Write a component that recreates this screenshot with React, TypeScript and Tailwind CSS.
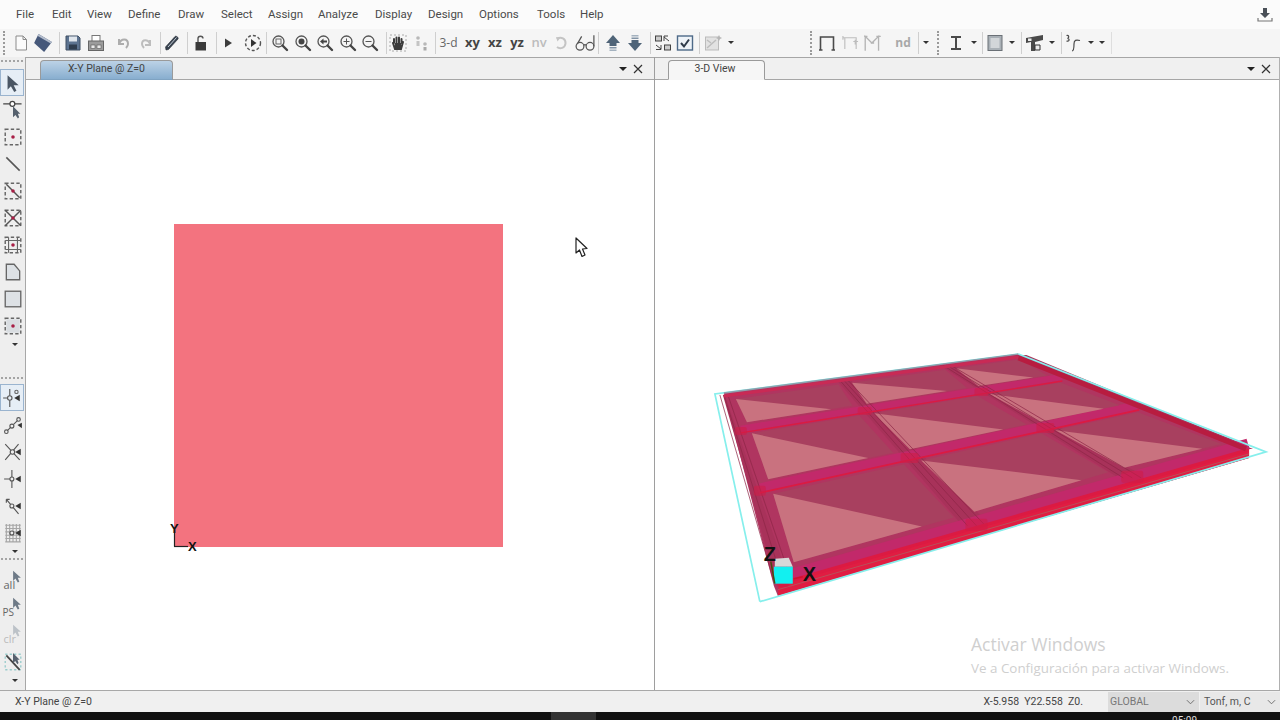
import React from "react";

type P = [number, number];
const grid: P[][] = [
  [[724, 395], [843, 379], [947, 365], [1019, 355]],
  [[741, 432], [865, 412], [982, 393], [1063, 380]],
  [[760, 492], [910, 459], [1046, 429], [1140, 409]],
  [[783, 582], [977, 526], [1133, 478], [1249, 449]],
];
const mix = (a: P, b: P, t: number): P => [a[0] + (b[0] - a[0]) * t, a[1] + (b[1] - a[1]) * t];
const cell = (r: number, c: number, u: number, v: number): P =>
  mix(mix(grid[r][c], grid[r][c + 1], u), mix(grid[r + 1][c], grid[r + 1][c + 1], u), v);
const pts = (a: P[]) => a.map((p) => `${p[0].toFixed(1)},${p[1].toFixed(1)}`).join(" ");

function Plate3D() {
  const cells: React.ReactNode[] = [];
  for (let r = 0; r < 3; r++)
    for (let c = 0; c < 3; c++) {
      const u0 = c === 0 ? 0.08 : 0.06, u1 = c === 2 ? 0.93 : 0.94, v0 = r === 0 ? 0.14 : 0.05, v1 = r === 0 ? 0.78 : 0.83;
      const tl = cell(r, c, u0, v0), tr = cell(r, c, u1, v0), br = cell(r, c, u1, v1), bl = cell(r, c, u0, v1);
      cells.push(<polygon key={`d${r}${c}`} points={pts([tl, tr, br, bl])} fill="#a8405f" />);
      cells.push(<polygon key={`l${r}${c}`} points={pts([tl, bl, mix(bl, br, 0.8)])} fill="#c9727f" />);
    }
  const cols = [0, 1, 2, 3].map((j) => {
    const b = grid[0][j], f = grid[3][j];
    const hb = j === 0 ? 1 : j === 3 ? 8 : 7, hf = j === 0 ? 7 : j === 3 ? 5 : 14;
    return <polygon key={j} points={pts([[b[0] - hb, b[1]], [b[0] + hb, b[1]], [f[0] + hf, f[1]], [f[0] - hf, f[1]]])} fill="#a8325a" />;
  });
  const colLines = [0, 1, 2].map((j) => {
    const b = grid[0][j], f = grid[3][j];
    return (
      <g key={j} stroke="#8f2747" strokeWidth="0.9" opacity="0.8">
        <line x1={b[0] - 4} y1={b[1]} x2={f[0] - 9} y2={f[1]} />
        <line x1={b[0]} y1={b[1]} x2={f[0]} y2={f[1]} />
        <line x1={b[0] + 4} y1={b[1]} x2={f[0] + 9} y2={f[1]} />
      </g>
    );
  });
  const rows = [1, 2, 3].map((i) => {
    const a = grid[i][0], b = grid[i][3];
    const w = [0, 3, 4, 5][i];
    return <line key={i} x1={a[0]} y1={a[1] - w} x2={b[0]} y2={b[1] - w} stroke="#c2296a" strokeWidth={w * 2.2} />;
  });
  const reds = [1, 2, 3].map((i) => {
    const a = grid[i][0], b = grid[i][3];
    const w = [0, 1.3, 1.8, 3.2][i];
    return <line key={i} x1={a[0]} y1={a[1] + 1} x2={b[0]} y2={b[1] + 1} stroke="#dc1a42" strokeWidth={w} />;
  });
  const nodes = [1, 2, 3].flatMap((i) =>
    [0, 1, 2].map((j) => {
      const p = grid[i][j];
      const w = j === 0 ? 12 : 10 + i * 4;
      return <rect key={`${i}-${j}`} x={p[0] - w / 2} y={p[1] - 4 - i} width={w} height={6 + i * 2} rx="2" fill="#cf1c48" opacity="0.6" />;
    })
  );
  return (
    <svg viewBox="655 80 625 610" className="block w-full h-full">
      <path d="M760 602 L715 394 L1019 354" fill="none" stroke="#86efec" strokeWidth="1.7" />
      <polygon points="724,393 1019,354 1250,446 1250,458 778,596 774,586" fill="#b03560" />
      {cols}
      {rows}
      {cells}
      {colLines}
      <polygon points="779,584 1250,449 1250,458 778,596" fill="#e01d42" />
      <line x1="778" y1="590" x2="1250" y2="454" stroke="#b8505a" strokeWidth="1" />
      {reds}
      {nodes}
      <line x1="724" y1="396" x2="1019" y2="357" stroke="#c92a55" strokeWidth="3" />
      <line x1="724" y1="393" x2="1019" y2="354" stroke="#8fa0ad" strokeWidth="1.4" />
      <line x1="1019" y1="358" x2="1247" y2="449" stroke="#b81c40" strokeWidth="5" />
      <polyline points="1019,354 1267,452 760,602" fill="none" stroke="#86efec" strokeWidth="1.7" />
      <polygon points="775,559 789,558 793,567 775,567" fill="#d8d8d8" />
      <rect x="774" y="567" width="19" height="17" fill="#12f0f0" />
      <line x1="771" y1="562" x2="775" y2="584" stroke="#4a4a10" strokeWidth="1.5" />
      <line x1="794" y1="579" x2="803" y2="577" stroke="#d01030" strokeWidth="1.5" />
      <text x="764" y="561" fontSize="20" fontWeight="700" fill="#111" fontFamily="Liberation Sans, sans-serif">Z</text>
      <text x="803" y="581" fontSize="20" fontWeight="700" fill="#111" fontFamily="Liberation Sans, sans-serif">X</text>
    </svg>
  );
}

function Plan2D() {
  return (
    <svg viewBox="26 80 628 610" className="block w-full h-full">
      <rect x="174" y="224" width="329" height="323" fill="#f3737f" />
      <line x1="174.5" y1="533" x2="174.5" y2="546.5" stroke="#222" strokeWidth="1.2" />
      <line x1="174" y1="546.5" x2="188" y2="546.5" stroke="#222" strokeWidth="1.2" />
      <text x="170" y="533" fontSize="13" fontWeight="700" fill="#111" fontFamily="Liberation Sans, sans-serif">Y</text>
      <text x="188" y="551" fontSize="13" fontWeight="700" fill="#111" fontFamily="Liberation Sans, sans-serif">X</text>
      <path d="M576 238 L576 253 L579.5 250 L582 256.5 L585 255 L582.5 249 L587 248.5 Z" fill="#fff" stroke="#222" strokeWidth="1.2" strokeLinejoin="round" />
    </svg>
  );
}

const Ic = ({ children, s = 18 }: { children: React.ReactNode; s?: number }) => (
  <svg viewBox="0 0 18 18" width={s} height={s} fill="none" className="block shrink-0">{children}</svg>
);
const Slot = ({ className, children }: { className: string; children?: React.ReactNode }) => (
  <div className={`flex items-center justify-center shrink-0 ${className}`}>{children}</div>
);
const Sep = ({ className }: { className: string }) => <div className={`w-px h-[22px] bg-[#cfcfcf] shrink-0 ${className}`} />;
const Grip = ({ className }: { className: string }) => (
  <div className={`w-[2px] h-[24px] shrink-0 border-l-2 border-dotted border-[#9a9a9a] ${className}`} />
);
const Chev = () => <div className="w-0 h-0 border-x-[3px] border-x-transparent border-t-[3px] border-t-[#333]" />;
const Txt = ({ children, className }: { children: React.ReactNode; className: string }) => (
  <span className={`font-['Open_Sans',sans-serif] leading-none ${className}`}>{children}</span>
);

const Mag = ({ children }: { children?: React.ReactNode }) => (
  <Ic>
    <circle cx="7.5" cy="7.5" r="5.5" stroke="#555" strokeWidth="1.3" fill="#f4f4f4" />
    <path d="M11.5 11.5 L16 16" stroke="#444" strokeWidth="2.4" strokeLinecap="round" />
    {children}
  </Ic>
);

function Toolbar() {
  return (
    <div className="h-[28px] pb-[1px] bg-[#f5f5f5] flex items-center shrink-0 relative">
      <Grip className="ml-[3px] mr-[5px]" />
      <Slot className="w-[22px]"><Ic><path d="M4 2 H11 L14.5 5.5 V16 H4 Z M11 2 V5.5 H14.5" fill="#fbfbfb" stroke="#8b8b8b" strokeWidth="1" /></Ic></Slot>
      <Slot className="w-[22px]"><Ic s={20}><path d="M1 9 L5 1 L17 8 L10 17 Z" fill="#46587a" /><path d="M5 1 L17 8 L16 9.5 L4 2.5 Z" fill="#b4bdcc" /></Ic></Slot>
      <Sep className="ml-[5px]" />
      <Slot className="w-[23px] ml-px"><Ic><path d="M2 2 H14 L16 4 V16 H2 Z" fill="#5c7390" stroke="#3f4f63" /><rect x="5" y="2.5" width="8" height="5" fill="#dfe5ec" /><rect x="5" y="10.5" width="8" height="5" fill="#2f3d4e" /></Ic></Slot>
      <Slot className="w-[23px]"><Ic><rect x="5" y="1.5" width="8" height="6" fill="#fff" stroke="#777" /><rect x="1.5" y="7" width="15" height="9.5" fill="#9c9c9c" stroke="#666" /><rect x="4" y="11" width="4" height="3.5" fill="#e8e8e8" stroke="#555" strokeWidth=".6" /><rect x="10" y="11" width="4" height="3.5" fill="#e8e8e8" stroke="#555" strokeWidth=".6" /></Ic></Slot>
      <Slot className="w-[23px] ml-[4px]"><Ic><path d="M5 5 L5 10 L10 10 M5 10 C7 4 14 4 14 10 C14 12 13 13 12 14" stroke="#adadad" strokeWidth="2" /></Ic></Slot>
      <Slot className="w-[23px]"><Ic><path d="M13 6 L13 11 L8 11 M13 10 C11 5 5 5 5 10 C5 12 6 13 7 14" stroke="#bdbdbd" strokeWidth="2" /></Ic></Slot>
      <Sep className="ml-[3px]" />
      <Slot className="w-[22px]"><Ic><path d="M3 16 L2.5 13 L12 2.5 C13 1.5 16 3.5 15 5 L5.5 15.5 Z" fill="#38424f" stroke="#242a33" strokeWidth=".6" /><path d="M5 13 L13.5 3.5" stroke="#c4cdd6" /></Ic></Slot>
      <Sep className="ml-[4px]" />
      <Slot className="w-[22px] ml-[2px]"><Ic><path d="M6 8 V4.5 C6 1.5 11 1.5 11 4.5" stroke="#555" strokeWidth="1.4" /><rect x="3.5" y="8" width="10.5" height="8.5" fill="#3a3a3a" /></Ic></Slot>
      <Sep className="ml-[4px]" />
      <Slot className="w-[22px]"><Ic><path d="M6 4.5 L13 9 L6 13.5 Z" fill="#3d3d3d" /></Ic></Slot>
      <Slot className="w-[23px] ml-[2px]"><Ic><circle cx="9" cy="9" r="7.5" stroke="#555" strokeWidth="1.4" strokeDasharray="3 2" /><path d="M7 5 L12.5 9 L7 13 Z" fill="#333" /></Ic></Slot>
      <Sep className="ml-[2px]" />
      <Slot className="w-[22.5px] ml-[2px]"><Mag><rect x="5" y="5" width="5" height="5" stroke="#666" /></Mag></Slot>
      <Slot className="w-[22.5px]"><Mag><circle cx="7.5" cy="7.5" r="3" fill="#444" /></Mag></Slot>
      <Slot className="w-[22.5px]"><Mag><path d="M4 7.5 L7.5 4.5 V6.5 H11 V8.5 H7.5 V10.5 Z" fill="#444" /></Mag></Slot>
      <Slot className="w-[22.5px]"><Mag><path d="M4.5 7.5 H10.5 M7.5 4.5 V10.5" stroke="#555" /></Mag></Slot>
      <Slot className="w-[22.5px]"><Mag><path d="M4.5 7.5 H10.5" stroke="#555" /></Mag></Slot>
      <Sep className="ml-[4.5px]" />
      <Slot className="w-[22px]"><Ic><rect x="1" y="1" width="16" height="16" stroke="#aaa" strokeDasharray="2 2" /><path d="M5 9 V5 M7.5 9 V3.5 M10 9 V3.5 M12.5 9 V5 M4 9 L6 15 H12 L14 8" stroke="#3c3c3c" strokeWidth="2" strokeLinecap="round" /><path d="M6 9 H12 V14 H6Z" fill="#3c3c3c" /></Ic></Slot>
      <Slot className="w-[24px] ml-px"><Ic><circle cx="5" cy="4" r="1.8" fill="#b8b8b8" /><rect x="3.5" y="7" width="3" height="5" fill="#c4c4c4" /><circle cx="12" cy="10" r="1.8" fill="#b8b8b8" /><rect x="10.5" y="13" width="3" height="3.5" fill="#aaa" /></Ic></Slot>
      <Sep className="ml-px" />
      <Slot className="w-[25px]"><Txt className="text-[12px] text-[#666]">3-d</Txt></Slot>
      <Slot className="w-[23px]"><Txt className="text-[13px] font-bold text-[#444]">xy</Txt></Slot>
      <Slot className="w-[22px]"><Txt className="text-[13px] font-bold text-[#444]">xz</Txt></Slot>
      <Slot className="w-[22px]"><Txt className="text-[13px] font-bold text-[#444]">yz</Txt></Slot>
      <Slot className="w-[22px]"><Txt className="text-[13px] font-semibold text-[#bcbcbc]">nv</Txt></Slot>
      <Slot className="w-[22px]"><Ic><path d="M5 5 C9 2 14 5 13.5 9.5 C13 14 8 15.5 5 13" stroke="#c4c4c4" strokeWidth="2" /><path d="M4 3 L8.5 3.5 L5.5 7.5 Z" fill="#c4c4c4" /></Ic></Slot>
      <Slot className="w-[25px]"><Ic s={20}><circle cx="4.5" cy="12" r="3.5" stroke="#555" strokeWidth="1.1" /><circle cx="13.5" cy="12" r="3.5" stroke="#555" strokeWidth="1.1" /><path d="M8 11 C8.5 10.5 9.5 10.5 10 11 M2 10 L6 3 M17 12 V2" stroke="#555" strokeWidth="1.1" /></Ic></Slot>
      <Sep className="ml-px" />
      <Slot className="w-[23px] ml-[2px]"><Ic><path d="M9 1 L16 9 H12.5 V12 H5.5 V9 H2 Z" fill="#4f6478" /><rect x="5.5" y="13" width="7" height="1.5" fill="#8193a5" /><rect x="5.5" y="15.5" width="7" height="1.5" fill="#a4b2bf" /></Ic></Slot>
      <Slot className="w-[22px]"><Ic><path d="M9 17 L16 9 H12.5 V6 H5.5 V9 H2 Z" fill="#4f6478" /><rect x="5.5" y="3.5" width="7" height="1.5" fill="#8193a5" /><rect x="5.5" y="1" width="7" height="1.5" fill="#a4b2bf" /></Ic></Slot>
      <Sep className="ml-[4px]" />
      <Slot className="w-[23px]"><Ic><rect x="1.5" y="2" width="6" height="5" stroke="#444" fill="#ccc" /><rect x="10.5" y="11" width="6" height="5" stroke="#444" fill="#ccc" /><path d="M10 2 V7 M10 2 H14 M10 3 L15 7 M2 11 L7 15 M7 11 V15.5 M2 15.5 H7" stroke="#444" /></Ic></Slot>
      <Slot className="w-[22px]"><Ic><rect x="1.5" y="2" width="15" height="14" fill="#eef3f8" stroke="#4e6a88" strokeWidth="1.4" /><path d="M5 9 L8 12.5 L13 5.5" stroke="#2f3b4a" strokeWidth="2" /></Ic></Slot>
      <Sep className="ml-[3px]" />
      <Slot className="w-[22px] ml-[2px]"><Ic><rect x="1.5" y="3" width="13" height="13" fill="#e2e2e2" stroke="#bbb" /><path d="M3 14 L12 6 M3 6 L7 9" stroke="#bdbdbd" strokeWidth="1.5" /><path d="M15 1 L16 3 L18 4 L16 5 L15 7 L14 5 L12 4 L14 3 Z" fill="#b5b5b5" /></Ic></Slot>
      <Slot className="w-[14px]"><Chev /></Slot>
      <Grip className="ml-[72px]" />
      <Slot className="w-[30px]"><Ic><path d="M2.5 16 V3 H15.5 V16 M1 16 H4.5 M13.5 16 H17" stroke="#4a4a4a" strokeWidth="1.6" /></Ic></Slot>
      <Slot className="w-[16px]"><Ic s={17}><path d="M3 16 V4 H15 V16 M1 2 V6 M1 4 H6 M12 8 H17 M14 6 V11" stroke="#bdbdbd" strokeWidth="1.2" /></Ic></Slot>
      <Slot className="w-[30px]"><Ic s={20}><path d="M2 16 V3 L8 9 L14 3 V16 M1 3 H4 M12 3 H16 M7 9 H10" stroke="#b4b4b4" strokeWidth="1.2" /></Ic></Slot>
      <Slot className="w-[30px]"><Txt className="text-[12px] font-bold text-[#a8a8a8]">nd</Txt></Slot>
      <Sep className="" />
      <Slot className="w-[14px]"><Chev /></Slot>
      <Grip className="ml-[4px]" />
      <Slot className="w-[28px] ml-[3px]"><Ic><path d="M4 3 H14 M4 15 H14 M9 3 V15" stroke="#4a4a4a" strokeWidth="2" /></Ic></Slot>
      <Slot className="w-[8px]"><Chev /></Slot>
      <Sep className="ml-[4px]" />
      <Slot className="w-[24px]"><Ic><rect x="2" y="1.5" width="14" height="15" fill="#a9b0b6" stroke="#6a7076" /><rect x="4.5" y="4" width="9" height="10" fill="#d2d6d9" /></Ic></Slot>
      <Slot className="w-[10px]"><Chev /></Slot>
      <Sep className="ml-[4px]" />
      <Slot className="w-[26px]"><Ic><path d="M0 4 L17 1 V6 L9 8 V17 H5 V8 L0 9 Z" fill="#4a4a4a" /><rect x="2" y="4.5" width="3.5" height="2.5" fill="#eee" /><path d="M9 11 H14 V16 H9 Z" fill="#eee" stroke="#333" /></Ic></Slot>
      <Slot className="w-[8px]"><Chev /></Slot>
      <Sep className="ml-[5px]" />
      <Slot className="w-[24px]"><Ic><path d="M1.5 1.5 C4 1 4.5 3.5 2.5 4.5 C5 4.5 4.5 8 1.5 7 M7 17 C9 17 9 13 9 10 C9 6 11 5.5 15 6.5" stroke="#4a4a4a" strokeWidth="1.2" /></Ic></Slot>
      <Slot className="w-[10px]"><Chev /></Slot>
      <Slot className="w-[12px]"><Chev /></Slot>
      <Sep className="ml-[3px] bg-[#dedede]" />
    </div>
  );
}

const Dot = () => <circle cx="9" cy="9" r="1.6" fill="#a81e45" />;
const Dash = () => <rect x="2" y="2" width="14" height="14" stroke="#666" strokeWidth="1.3" strokeDasharray="3 2" />;
const Arrow = ({ x = 10, y = 7 }: { x?: number; y?: number }) => (
  <path d={`M${x} ${y} V${y + 9} L${x + 2} ${y + 7} L${x + 4} ${y + 10} L${x + 5} ${y + 9} L${x + 4} ${y + 6} L${x + 6} ${y + 6} Z`} fill="#56616e" />
);
const Snap = () => <path d="M11 9 L16 6 V12 Z" fill="#333" />;
const VSlot = ({ children, className = "" }: { children: React.ReactNode; className?: string }) => (
  <div className={`h-[27px] flex items-center justify-center shrink-0 ${className}`}>{children}</div>
);
const VChev = () => <div className="h-[10px] flex items-center justify-end pr-[7px] shrink-0"><Chev /></div>;
const HGrip = ({ className }: { className: string }) => <div className={`h-[2px] w-[22px] ml-[1px] border-t-2 border-dotted border-[#a4a4a4] shrink-0 ${className}`} />;

function LeftBar() {
  return (
    <div className="w-[26px] shrink-0 bg-[#eeeeee] border-r border-[#a8a8a8] flex flex-col">
      <HGrip className="mt-[3px]" />
      <div className="h-[7px] shrink-0" />
      <VSlot className="w-[24px] bg-[#e6eef6] border border-[#9ab4cf]"><Ic s={20}><path d="M5 2 V15 L8 12 L11 17 L13 16 L10.5 11 L15 11 Z" fill="#4a5664" /></Ic></VSlot>
      <VSlot><Ic s={22}><path d="M1 4 H7 M10 4 H16" stroke="#444" /><circle cx="8.5" cy="4" r="2" stroke="#444" fill="#fff" /><Arrow x={9} y={6} /></Ic></VSlot>
      <VSlot><Ic s={20}><Dash /><Dot /></Ic></VSlot>
      <VSlot><Ic s={20}><path d="M3 3 L15 15" stroke="#555" strokeWidth="1.4" /></Ic></VSlot>
      <VSlot><Ic s={20}><Dash /><path d="M3 3 L15 15" stroke="#555" strokeWidth="1.3" /><Dot /></Ic></VSlot>
      <VSlot><Ic s={20}><Dash /><path d="M2 2 L16 16 M16 2 L2 16" stroke="#555" strokeWidth="1.3" /><Dot /></Ic></VSlot>
      <VSlot><Ic s={20}><Dash /><path d="M2 5 H16 M2 13 H16 M5 2 V16 M13 2 V16" stroke="#666" strokeWidth="1" /><Dot /></Ic></VSlot>
      <VSlot><Ic s={20}><path d="M3 2 H10 L15 8 V16 H3 Z" fill="#dde1e5" stroke="#666" strokeWidth="1.2" /></Ic></VSlot>
      <VSlot><Ic s={20}><rect x="2" y="2" width="14" height="14" fill="#dde1e5" stroke="#666" strokeWidth="1.2" /></Ic></VSlot>
      <VSlot><Ic s={20}><rect x="3" y="3" width="12" height="12" fill="#d9dde1" /><Dash /><Dot /></Ic></VSlot>
      <VChev />
      <div className="h-[28px] shrink-0" />
      <HGrip className="" />
      <div className="h-[5px] shrink-0" />
      <VSlot className="w-[24px] bg-[#e6eef6] border border-[#9ab4cf]"><Ic s={20}><circle cx="13" cy="3.5" r="1.5" stroke="#666" /><path d="M7 1 V7 M7 11 V17 M1 9 H5" stroke="#555" /><circle cx="7" cy="9" r="2" stroke="#555" /><Snap /></Ic></VSlot>
      <VSlot><Ic s={20}><circle cx="3" cy="15" r="1.6" stroke="#555" /><circle cx="8" cy="10" r="1.8" stroke="#555" /><circle cx="14" cy="4" r="1.6" stroke="#555" /><path d="M4 14 L7 11 M9.5 8.5 L13 5" stroke="#555" /><path d="M13 9 L17 7 V12 Z" fill="#333" /></Ic></VSlot>
      <VSlot><Ic s={20}><path d="M2 2 L15 16 M14 2 L2 16" stroke="#555" /><circle cx="8.5" cy="9" r="2" fill="#eee" stroke="#555" /><Snap /></Ic></VSlot>
      <VSlot><Ic s={20}><path d="M8 1 V17 M1 9 H7" stroke="#555" /><circle cx="8" cy="9" r="1.8" fill="#eee" stroke="#555" /><Snap /></Ic></VSlot>
      <VSlot><Ic s={20}><path d="M3 3 L14 16 M3 3 H6 M3 3 V6" stroke="#555" /><circle cx="8" cy="9" r="1.8" fill="#eee" stroke="#555" /><Snap /></Ic></VSlot>
      <VSlot><Ic s={20}><path d="M2 2 H16 M2 5 H16 M2 8 H16 M2 11 H16 M2 14 H16 M2 17 H16 M3 1 V17 M6 1 V17 M9 1 V17 M12 1 V17 M15 1 V17" stroke="#a6a6a6" /><circle cx="8" cy="9" r="1.8" fill="#eee" stroke="#555" /><Snap /></Ic></VSlot>
      <VChev />
      <HGrip className="mt-[2px]" />
      <div className="h-[7px] shrink-0" />
      <VSlot><div className="relative w-[22px] h-[22px]"><Txt className="absolute left-[2px] bottom-[2px] text-[11px] text-[#666]">all</Txt><div className="absolute right-0 top-0"><Ic s={14}><path d="M4 1 V14 L7 11 L10 16 L12 15 L10 10 L14 10 Z" fill="#6e7a87" /></Ic></div></div></VSlot>
      <VSlot><div className="relative w-[22px] h-[22px]"><Txt className="absolute left-[1px] bottom-[2px] text-[10px] text-[#666]">PS</Txt><div className="absolute right-0 top-0"><Ic s={14}><path d="M4 1 V14 L7 11 L10 16 L12 15 L10 10 L14 10 Z" fill="#6e7a87" /></Ic></div></div></VSlot>
      <VSlot><div className="relative w-[22px] h-[22px]"><Txt className="absolute left-[2px] bottom-[2px] text-[11px] text-[#bbb]">clr</Txt><div className="absolute right-0 top-0"><Ic s={14}><path d="M4 1 V14 L7 11 L10 16 L12 15 L10 10 L14 10 Z" fill="#bcc2c8" /></Ic></div></div></VSlot>
      <VSlot><Ic s={20}><rect x="2" y="2" width="14" height="14" stroke="#9cc" strokeWidth="1.2" strokeDasharray="2 2" /><path d="M3 3 L15 16" stroke="#444" strokeWidth="1.6" /><Arrow x={9} y={1} /></Ic></VSlot>
      <VChev />
    </div>
  );
}

const PaneHead = ({ title, active, tabClass, closeClass }: { title: string; active: boolean; tabClass: string; closeClass: string }) => (
  <div className="h-[23px] shrink-0 bg-[#f0f0f0] border-y border-y-[#a6a6a6] flex items-end relative">
    <div
      className={`h-[20px] pb-[2px] mb-[-1px] flex items-center justify-center rounded-t-[4px] border border-[#9a9a9a] text-[10.5px] text-[#444] font-['Roboto',sans-serif] ${tabClass} ${
        active ? "bg-gradient-to-b from-[#bcd2e6] to-[#88aecf] border-b-[#7fa3c2]" : "bg-[#f6f6f6] border-b-[#f6f6f6]"
      }`}
    >
      {title}
    </div>
    <div className="ml-auto h-full flex items-center">
      <div className="w-0 h-0 border-x-[4px] border-x-transparent border-t-[4px] border-t-[#222]" />
      <svg viewBox="0 0 10 10" width="10" height="10" className={`ml-[6px] ${closeClass}`}><path d="M1 1 L9 9 M9 1 L1 9" stroke="#333" strokeWidth="1.2" /></svg>
    </div>
  </div>
);

const menu: [string, string][] = [
  ["File", "w-[36px]"], ["Edit", "w-[35px]"], ["View", "w-[41px]"], ["Define", "w-[50px]"], ["Draw", "w-[43px]"], ["Select", "w-[47px]"],
  ["Assign", "w-[50px]"], ["Analyze", "w-[57px]"], ["Display", "w-[53px]"], ["Design", "w-[51px]"], ["Options", "w-[58px]"], ["Tools", "w-[43px]"], ["Help", "w-[30px]"],
];

export default function App() {
  return (
    <div className="w-[1280px] h-[720px] overflow-hidden bg-white flex flex-col font-['Roboto',sans-serif]">
      <div className="h-[29px] pt-[1px] bg-[#fbfbfb] shrink-0 flex items-center pl-[16px] text-[11.5px] text-[#4a4a4a] relative">
        {menu.map(([m, w]) => <span key={m} className={`shrink-0 ${w}`}>{m}</span>)}
        <div className="ml-auto mr-[7px]">
          <svg viewBox="0 0 16 16" width="16" height="16" className="block"><path d="M6 1 H10 V6 H13 L8 11 L3 6 H6 Z" fill="#4a5058" /><path d="M1 11 V14 H15 V11" fill="none" stroke="#777" strokeWidth="1.2" /></svg>
        </div>
      </div>
      <Toolbar />
      <div className="flex-1 min-h-0 flex">
        <LeftBar />
        <div className="w-[628px] shrink-0 flex flex-col border-r border-[#9e9e9e] box-content">
          <PaneHead title="X-Y Plane @ Z=0" active tabClass="w-[133px] ml-[14px]" closeClass="mr-[11px]" />
          <div className="flex-1 min-h-0"><Plan2D /></div>
        </div>
        <div className="flex-1 min-w-0 flex flex-col border-r border-[#b0b0b0] relative">
          <PaneHead title="3-D View" active={false} tabClass="w-[97px] ml-[13px] pr-[3px]" closeClass="mr-[8px]" />
          <div className="flex-1 min-h-0"><Plate3D /></div>
          <div className="absolute left-[316px] top-[579px] text-[#cfcfcf] leading-none font-['Open_Sans',sans-serif]">
            <div className="text-[17.5px]">Activar Windows</div>
            <div className="text-[13.4px] mt-[8px] whitespace-nowrap">Ve a Configuración para activar Windows.</div>
          </div>
        </div>
      </div>
      <div className="h-[22px] pt-[1px] shrink-0 bg-[#f0f0f0] border-t border-[#a8a8a8] flex items-center text-[10.5px] text-[#444]">
        <span className="ml-[15px]">X-Y Plane @ Z=0</span>
        <span className="ml-auto">X-5.958&nbsp; Y22.558&nbsp; Z0.</span>
        <div className="ml-[25px] w-[92px] h-full bg-[#dcdcdc] flex items-center justify-between pl-[2px] pr-[4px] text-[#777] border-r border-[#f0f0f0]">
          <span>GLOBAL</span>
          <svg viewBox="0 0 10 6" width="9" height="6"><path d="M1 1 L5 5 L9 1" fill="none" stroke="#666" /></svg>
        </div>
        <div className="w-[80px] h-full bg-[#e8e8e8] flex items-center justify-between pl-[4px] pr-[4px] text-[#555]">
          <span>Tonf, m, C</span>
          <svg viewBox="0 0 10 6" width="9" height="6"><path d="M1 1 L5 5 L9 1" fill="none" stroke="#666" /></svg>
        </div>
      </div>
      <div className="h-[8px] shrink-0 bg-[#111111] flex overflow-hidden relative">
        <div className="ml-[551px] w-[45px] h-full bg-[#333333]" />
        <span className="ml-auto mr-[83px] mt-[4px] text-[10px] leading-none text-[#dddddd]">05:09</span>
      </div>
    </div>
  );
}
